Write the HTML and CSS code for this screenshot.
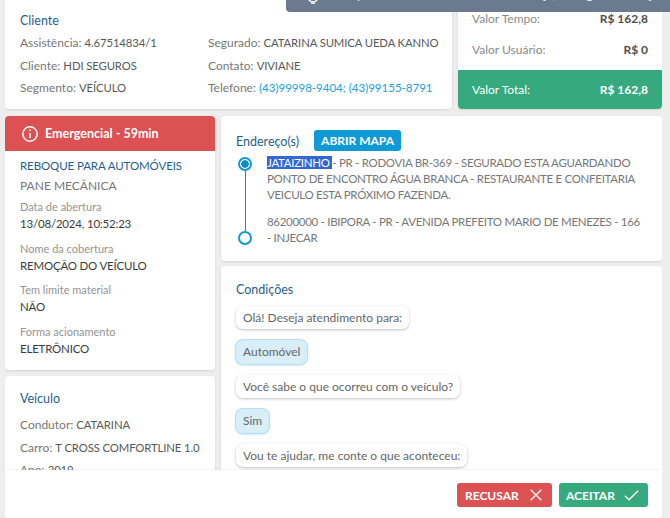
FILE: index.html
```html
<!DOCTYPE html>
<html lang="pt-BR">
<head>
<meta charset="utf-8">
<title>Atendimento</title>
<link rel="stylesheet" href="styles.css">
</head>
<body>
<div class="toast"><svg class="toast-icon" viewBox="0 0 14 4"><circle cx="7" cy="-3" r="5" fill="none" stroke="#fff" stroke-width="1.3"/><path d="M5 3.2h4" stroke="#fff" stroke-width="1.2"/></svg><span class="toast-text">Você precisa aceitar este atendimento hoje, de seguida ainda já.</span></div>
<div class="shell">
  <main class="content">
    <div class="row-top">
      <section class="card client">
        <h2 class="title">Cliente</h2>
        <div class="client-grid">
          <p class="line">Assistência: <b>4.67514834/1</b></p>
          <p class="line">Segurado: <b>CATARINA SUMICA UEDA KANNO</b></p>
          <p class="line">Cliente: <b>HDI SEGUROS</b></p>
          <p class="line">Contato: <b>VIVIANE</b></p>
          <p class="line">Segmento: <b>VEÍCULO</b></p>
          <p class="line">Telefone: <a class="phone">(43)99998-9404; (43)99155-8791</a></p>
        </div>
      </section>
      <section class="card values">
        <div class="value-rows">
          <div class="value-row"><span>Valor Tempo:</span><strong>R$ 162,8</strong></div>
          <div class="value-row"><span>Valor Usuário:</span><strong>R$ 0</strong></div>
        </div>
        <div class="value-total"><span>Valor Total:</span><strong>R$ 162,8</strong></div>
      </section>
    </div>
    <div class="row-main">
      <div class="col-left">
        <section class="card service">
          <div class="alert">
            <svg class="alert-icon" viewBox="0 0 18 18"><circle cx="9" cy="9" r="7.2" fill="none" stroke="#fff" stroke-width="1.5"/><path d="M9 8v5" stroke="#fff" stroke-width="1.6"/><circle cx="9" cy="5.3" r="1" fill="#fff"/></svg>
            <span>Emergencial - 59min</span>
          </div>
          <div class="service-body">
            <h3 class="service-title">REBOQUE PARA AUTOMÓVEIS</h3>
            <p class="service-sub">PANE MECÂNICA</p>
            <div class="field"><small>Data de abertura</small><b>13/08/2024, 10:52:23</b></div>
            <div class="field"><small>Nome da cobertura</small><b>REMOÇÃO DO VEÍCULO</b></div>
            <div class="field"><small>Tem limite material</small><b>NÃO</b></div>
            <div class="field"><small>Forma acionamento</small><b>ELETRÔNICO</b></div>
          </div>
        </section>
        <section class="card vehicle">
          <h2 class="title">Veículo</h2>
          <p class="line">Condutor: <b>CATARINA</b></p>
          <p class="line">Carro: <b>T CROSS COMFORTLINE 1.0</b></p>
          <p class="line">Ano: <b>2019</b></p>
        </section>
      </div>
      <div class="col-right">
        <section class="card address">
          <div class="address-head"><h2 class="title head-title">Endereço(s)</h2><button class="map-btn">ABRIR MAPA</button></div>
          <div class="stops">
            <div class="stop first"><span class="dot filled"></span><p><mark class="sel">JATAIZINHO </mark>- PR - RODOVIA BR-369 - SEGURADO ESTA AGUARDANDO PONTO DE ENCONTRO ÁGUA BRANCA - RESTAURANTE E CONFEITARIA VEICULO ESTA PRÓXIMO FAZENDA.</p></div>
            <div class="stop"><span class="dot"></span><p>86200000 - IBIPORA - PR - AVENIDA PREFEITO MARIO DE MENEZES - 166<br>- INJECAR</p></div>
          </div>
        </section>
        <section class="card conditions">
          <h2 class="title">Condições</h2>
          <div class="chat">
            <div class="bubble">Olá! Deseja atendimento para:</div>
            <div class="bubble answer">Automóvel</div>
            <div class="bubble">Você sabe o que ocorreu com o veículo?</div>
            <div class="bubble answer">Sim</div>
            <div class="bubble">Vou te ajudar, me conte o que aconteceu:</div>
          </div>
        </section>
      </div>
    </div>
  </main>
  <footer class="actions">
    <button class="action refuse">RECUSAR<svg viewBox="0 0 12 12"><path d="M.7.7l10.6 10.6M11.3.7L.7 11.3" stroke="#fff" stroke-width="1.3" fill="none"/></svg></button>
    <button class="action accept">ACEITAR<svg viewBox="0 0 15 11"><path d="M.8 5.8l4.2 4L14.2.8" stroke="#fff" stroke-width="1.3" fill="none"/></svg></button>
  </footer>
</div>
</body>
</html>
```
FILE: styles.css
```css
* { box-sizing: border-box; }
html, body { margin: 0; height: 100%; overflow: hidden; }
body { background: #eeeeee; font-family: "Lato", "Noto Sans", sans-serif; font-size: 12px; color: #777; position: relative; }
p, h2, h3 { margin: 0; }
.shell { height: 518px; padding: 0 8px 0 5px; display: flex; flex-direction: column; }
.content { height: 470px; overflow: hidden; flex: none; }
.card { background: #fff; border-radius: 4px; box-shadow: 0 1px 3px rgba(0,0,0,.1); }
.row-top { display: flex; gap: 6px; height: 109px; }
.client { width: 447px; padding: 13px 15px; border-radius: 0 0 4px 4px; }
.title { font-size: 12.5px; font-weight: 400; color: #1f5f8b; line-height: 16px; }
.client-grid { display: grid; grid-template-columns: 188px 1fr; margin-top: 3px; }
.line { line-height: 22.5px; white-space: nowrap; }
.line b { font-weight: 400; color: #585858; font-size: 11.3px; letter-spacing: -.1px; }
.phone { color: #1d9fdc; font-size: 11.5px; }
.values { width: 204px; display: flex; flex-direction: column; justify-content: space-between; border-radius: 0 0 4px 4px; overflow: hidden; }
.value-rows { padding: 8px 14px 0; }
.value-row { display: flex; justify-content: space-between; line-height: 22px; margin-bottom: 9px; color: #8a8a8a; }
.value-row strong { color: #4e4e4e; font-weight: 700; }
.value-total { height: 41px; background: #36a97f; color: #fff; padding: 0 14px; display: flex; justify-content: space-between; align-items: center; }
.row-main { display: flex; gap: 6px; margin-top: 7px; }
.col-left { width: 210px; display: flex; flex-direction: column; gap: 6px; }
.col-right { width: 441px; display: flex; flex-direction: column; gap: 5px; }
.service { height: 254px; overflow: hidden; }
.alert { height: 35px; background: #dc5151; color: #fff; font-weight: 700; font-size: 12.5px; display: flex; align-items: center; gap: 6px; padding-left: 16px; }
.alert-icon { width: 18px; height: 18px; }
.service-body { padding: 5px 15px; }
.service-title { font-size: 11.5px; font-weight: 400; color: #1f5f8b; line-height: 20px; letter-spacing: -.1px; }
.service-sub { line-height: 20px; }
.field { margin-top: 3px; }
.field small { display: block; font-size: 11px; line-height: 16px; color: #949494; }
.field b { display: block; font-weight: 400; color: #3c3c3c; font-size: 11.5px; letter-spacing: -.2px; line-height: 18px; margin-bottom: 7.67px; }
.vehicle { height: 120px; padding: 15px; }
.vehicle .title { margin-bottom: 7px; }
.address { height: 145px; padding: 14px 15px; }
.address-head { display: flex; align-items: flex-end; gap: 15px; }
.head-title { line-height: 18px; }
.map-btn { border: 0; background: #0f9ad6; color: #fff; font: 700 12px "Lato", sans-serif; border-radius: 3px; height: 21px; padding: 0 7px; }
.stops { margin-top: 4px; }
.stop { display: flex; gap: 15px; position: relative; padding-left: 2px; line-height: 16px; font-size: 11.5px; letter-spacing: -.3px; }
.stop p { width: 380px; }
.stop.first { padding-bottom: 11px; }
.stop.first::after { content: ""; position: absolute; left: 9px; top: 16px; bottom: -17px; width: 1px; background: #0f8cc4; }
.dot { width: 14px; height: 14px; border: 2px solid #0f9ad6; border-radius: 50%; flex: none; background: #fff; margin-top: 2px; }
.stop:not(.first) .dot { margin-top: 17px; }
.dot.filled { background: radial-gradient(circle, #0f8cc4 0 3.5px, #fff 4px); }
.sel { background: #3367d1; color: #fff; }
.conditions { height: 210px; padding: 16px 15px; }
.chat { display: flex; flex-direction: column; align-items: flex-start; gap: 11px; margin-top: 8px; }
.bubble { border-radius: 7px; padding: 0 7px; height: 23px; line-height: 23px; background: #fff; box-shadow: 0 1px 3px rgba(0,0,0,.25); color: #666; }
.answer { background: #d8eef8; box-shadow: 0 0 0 1px #b9e0f2, 0 1px 3px rgba(15,154,214,.4); height: 24px; line-height: 24px; }
.actions { height: 48px; flex: none; background: #fff; border-radius: 0 0 4px 4px; display: flex; justify-content: flex-end; align-items: flex-start; gap: 7px; padding: 13px 14px 0; box-shadow: 0 -1px 1px rgba(0,0,0,.04); position: relative; }
.action { border: 0; height: 24px; border-radius: 3px; color: #fff; font: 700 12px "Lato", sans-serif; display: flex; align-items: center; gap: 11px; padding: 0 8px; }
.action svg { width: 12px; height: 12px; flex: none; }
.refuse { background: #dc5151; width: 95px; }
.accept { background: #36a97f; width: 89px; gap: 9px; padding: 0 7px; }
.accept svg { width: 15px; height: 11px; }
.toast { position: absolute; top: 0; right: 0; width: 384px; height: 12px; background: #6b7a8f; border-radius: 0 0 0 4px; overflow: hidden; color: #fff; white-space: nowrap; z-index: 2; }
.toast-icon { position: absolute; left: 20px; top: 0; width: 14px; height: 4px; }
.toast-text { position: absolute; left: 42px; top: -11px; line-height: 12px; }
```
